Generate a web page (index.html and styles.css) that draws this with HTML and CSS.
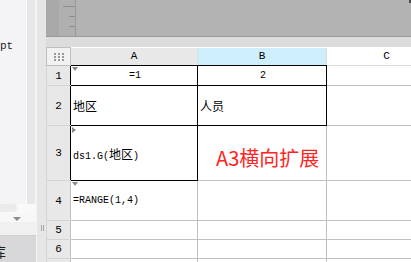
FILE: index.html
```html
<!DOCTYPE html>
<html lang="zh-cn">
<head>
    <meta charset="UTF-8">
    <title>报表设计</title>
    <link rel="stylesheet" href="styles.css">
</head>
<body>
    <div class="lado">
        <div class="arvore">
            <div class="arvoreCorpo"><span class="nomeArq">pt</span></div>
            <div class="trilhaV"></div>
        </div>
        <div class="barraH"><div class="polegar"></div></div>
        <div class="linhaSeta"><span class="seta"></span></div>
        <div class="vazio"></div>
        <div class="aba"><span class="abaTxt">库</span></div>
    </div>
    <div class="divisor"><span class="alca"></span></div>
    <div class="principal">
        <div class="topo">
            <div class="topoEsq"></div>
            <div class="regua">
                <span class="marca longa"></span>
                <span class="marca"></span>
                <span class="marca"></span>
            </div>
            <div class="topoResto"><span class="pontinho"></span></div>
        </div>
        <div class="faixa"></div>
        <table class="grade">
            <colgroup>
                <col style="width:24px">
                <col style="width:127px">
                <col style="width:129px">
                <col style="width:120px">
            </colgroup>
            <tr class="cab">
                <td class="canto">
                    <svg width="10" height="8" viewBox="0 0 10 8">
                        <g fill="#9a9a9a">
                            <rect x="0" y="0" width="2" height="2"/><rect x="4" y="0" width="2" height="2"/><rect x="8" y="0" width="2" height="2"/>
                            <rect x="0" y="3" width="2" height="2"/><rect x="4" y="3" width="2" height="2"/><rect x="8" y="3" width="2" height="2"/>
                            <rect x="0" y="6" width="2" height="2"/><rect x="4" y="6" width="2" height="2"/><rect x="8" y="6" width="2" height="2"/>
                        </g>
                    </svg>
                </td>
                <td class="colCab escuro">A</td>
                <td class="colCab sel escuro">B</td>
                <td class="colCab branco">C</td>
            </tr>
            <tr class="l1">
                <td class="linCab escuro">1</td>
                <td class="cel preto centro"><span class="expD"></span>=1</td>
                <td class="cel preto centro">2</td>
                <td class="cel"></td>
            </tr>
            <tr class="l2">
                <td class="linCab escuro">2</td>
                <td class="cel preto"><span class="cjk">地区</span></td>
                <td class="cel preto"><span class="cjk">人员</span></td>
                <td class="cel"></td>
            </tr>
            <tr class="l3">
                <td class="linCab escuro">3</td>
                <td class="cel preto"><span class="expR"></span>ds1.G(<span class="cjk">地区</span>)</td>
                <td class="cel nota">A3横向扩展</td>
                <td class="cel"></td>
            </tr>
            <tr class="l4">
                <td class="linCab">4</td>
                <td class="cel"><span class="expD"></span>=RANGE(1,4)</td>
                <td class="cel"></td>
                <td class="cel"></td>
            </tr>
            <tr class="l5">
                <td class="linCab">5</td>
                <td class="cel"></td>
                <td class="cel"></td>
                <td class="cel"></td>
            </tr>
            <tr class="l5">
                <td class="linCab">6</td>
                <td class="cel"></td>
                <td class="cel"></td>
                <td class="cel"></td>
            </tr>
            <tr class="l5">
                <td class="linCab"></td>
                <td class="cel"></td>
                <td class="cel"></td>
                <td class="cel"></td>
            </tr>
        </table>
    </div>
</body>
</html>
```
FILE: styles.css
```css
body
{
    margin: 0;
    width: 411px;
    height: 262px;
    overflow: hidden;
    display: flex;
    background: #ffffff;
    font-family: "Liberation Mono", "Noto Sans CJK SC", monospace;
}

/* painel da esquerda */
.lado
{
    width: 36px;
    display: flex;
    flex-direction: column;
    background: #f7f7f8;
}

.arvore
{
    height: 204px;
    display: flex;
}

.arvoreCorpo
{
    width: 27px;
    border-right: 1px solid #ffffff;
    background: #f4f4f6;
    overflow: hidden;
    padding-top: 36px;
    box-sizing: border-box;
}

.nomeArq
{
    font-size: 11px;
    color: #222222;
    white-space: nowrap;
}

.trilhaV
{
    width: 8px;
    background: #e7e7e7;
}

.barraH
{
    height: 9px;
    background: #f9f9f9;
}

.polegar
{
    width: 17px;
    height: 8px;
    background: #ebebeb;
    border-radius: 0 4px 4px 0;
}

.linhaSeta
{
    height: 9px;
    padding-left: 13px;
    padding-top: 4px;
    box-sizing: border-box;
}

.seta
{
    display: block;
    width: 0;
    height: 0;
    border-left: 4px solid transparent;
    border-right: 4px solid transparent;
    border-top: 4px solid #8c8c8c;
}

.vazio
{
    height: 13px;
    background: #f0f0f0;
    border-bottom: 1px solid #cfcfcf;
}

.aba
{
    flex: 1;
    background: #d8d8da;
    overflow: hidden;
    padding-top: 7px;
    box-sizing: border-box;
}

.abaTxt
{
    display: block;
    margin-left: -8px;
    font-family: "Noto Sans CJK SC", sans-serif;
    font-size: 14px;
    line-height: 16px;
    color: #222222;
}

.divisor
{
    width: 10px;
    border-left: 1px solid #f2f2f2;
    background: #e6e6e6;
    padding-top: 225px;
    padding-left: 4px;
    box-sizing: border-box;
}

.alca
{
    display: block;
    width: 1px;
    height: 6px;
    border-left: 1px solid #a8a8a8;
    border-right: 1px solid #a8a8a8;
}

/* area principal */
.principal
{
    flex: 1;
    overflow: hidden;
    display: flex;
    flex-direction: column;
}

.topo
{
    height: 36px;
    border-bottom: 1px solid #9a9a9a;
    display: flex;
    flex-shrink: 0;
}

.topoEsq
{
    width: 13px;
    background: #a9a9a9;
}

.regua
{
    width: 17px;
    background: #b0b0b0;
    border-right: 1px solid #999999;
    display: flex;
    flex-direction: column;
    align-items: flex-end;
    gap: 9px;
    padding-top: 6px;
    box-sizing: border-box;
}

.marca
{
    display: block;
    width: 6px;
    height: 1px;
    background: #8e8e8e;
}

.marca.longa
{
    width: 12px;
}

.topoResto
{
    flex: 1;
    background: #b3b3b3;
    display: flex;
    justify-content: flex-end;
}

.pontinho
{
    width: 2px;
    height: 3px;
    background: #4a4a4a;
}

.faixa
{
    height: 10px;
    background: #dcdcdc;
    flex-shrink: 0;
}

/* planilha */
.grade
{
    border-collapse: collapse;
    table-layout: fixed;
    width: 400px;
    border-left: 1px solid #dcdcdc;
}

.grade td
{
    border: 1px solid #c0c0c0;
    padding: 0;
    overflow: hidden;
    white-space: nowrap;
    font-size: 10px;
    color: #000000;
}

.cab
{
    height: 18px;
}

.l1 { height: 20px; }
.l2 { height: 40px; }
.l3 { height: 55px; }
.l4 { height: 40px; }
.l5 { height: 19px; }

.canto
{
    background: #f2f2f2;
    text-align: center;
    vertical-align: middle;
    line-height: 0;
}

.grade td.colCab
{
    background: #e8e8e8;
    text-align: center;
    font-size: 11px;
    border-color: #dcdcdc;
    border-top: none;
}

.grade td.colCab.sel
{
    background: #cdeefa;
}

.grade td.colCab.branco
{
    background: #ffffff;
}

.grade td.colCab.escuro
{
    border-bottom-color: #000000;
}

.grade td.linCab
{
    background: #e8e8e8;
    text-align: center;
    font-size: 11px;
    border-color: #d4d4d4;
    border-right-color: #c0c0c0;
}

.grade td.linCab.escuro
{
    border-right-color: #000000;
}

.grade td.preto
{
    border-color: #000000;
}

.cel
{
    position: relative;
    padding-left: 2px;
    vertical-align: middle;
}

.grade td.cel
{
    padding-left: 2px;
}

.centro
{
    text-align: center;
}

.cjk
{
    font-family: "Noto Sans CJK SC", sans-serif;
    font-size: 12px;
}

.grade td.nota
{
    overflow: visible;
    padding-left: 18px;
    padding-top: 9px;
    font-family: "Noto Sans CJK SC", sans-serif;
    font-size: 20px;
    color: #ff2424;
}

/* marcadores de expansao */
.expD,
.expR
{
    position: absolute;
    top: 1px;
    left: 1px;
    width: 0;
    height: 0;
}

.expD
{
    border-left: 3px solid transparent;
    border-right: 3px solid transparent;
    border-top: 4px solid #8a8a8a;
}

.expR
{
    border-top: 3px solid transparent;
    border-bottom: 3px solid transparent;
    border-left: 4px solid #8a8a8a;
}
```
